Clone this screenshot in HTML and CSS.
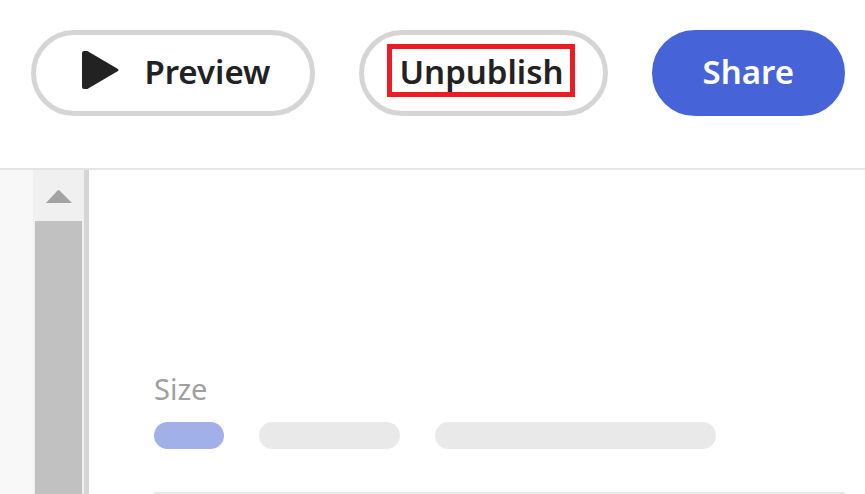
FILE: index.html
```html
<!DOCTYPE html>
<html lang="en">
<head>
<meta charset="utf-8">
<title>Form editor</title>
<link rel="stylesheet" href="styles.css">
</head>
<body>
<header class="toolbar">
  <button class="btn btn-preview" type="button">
    <svg class="play" viewBox="0 0 38 40" aria-hidden="true"><path d="M1 3Q1 1 3 1H6Q7 1 8 2L37 19Q38 20 37 21L8 38Q7 39 6 39H3Q1 39 1 37Z"/></svg>
    <span>Preview</span>
  </button>
  <button class="btn btn-unpublish" type="button"><span class="highlight">Unpublish</span></button>
  <button class="btn btn-share" type="button">Share</button>
</header>
<main class="workspace">
  <div class="gutter"></div>
  <div class="scrollbar">
    <button class="scroll-up" type="button" aria-label="Scroll up">
      <svg class="arrow" viewBox="0 0 26 13" aria-hidden="true"><path d="M0 13L12 0H13L26 13Z"/></svg>
    </button>
    <div class="thumb"></div>
  </div>
  <section class="panel">
    <h2 class="label">Size</h2>
    <div class="pills">
      <span class="pill pill-small"></span>
      <span class="pill pill-medium"></span>
      <span class="pill pill-large"></span>
    </div>
    <div class="card"></div>
  </section>
</main>
</body>
</html>
```
FILE: styles.css
```css
* {
  box-sizing: border-box;
}

body {
  margin: 0;
  height: 100vh;
  display: flex;
  flex-direction: column;
  overflow: hidden;
  background: #fff;
  color: #222;
  font-family: "Noto Sans", "Open Sans", sans-serif;
}

.toolbar {
  display: flex;
  justify-content: flex-end;
  gap: 44px;
  padding: 30px 20px 52px;
  border-bottom: 2px solid #e4e4e4;
}

.btn {
  display: flex;
  align-items: center;
  justify-content: center;
  height: 86px;
  padding: 0 46px 2px;
  border: 5px solid #d5d5d5;
  border-radius: 43px;
  background: #fff;
  color: #222;
  font: 600 33px/44px "Noto Sans", "Open Sans", sans-serif;
}

.btn-preview {
  gap: 25px;
  padding: 0 40px 2px 45px;
}

.play {
  width: 38px;
  height: 40px;
  margin-bottom: 4px;
  fill: #222;
}

.btn-unpublish {
  padding: 0 28px 5px 23px;
}

.highlight {
  height: 53px;
  padding: 0 6px 0 7px;
  border: 5px solid #ed1c24;
  line-height: 46px;
}

.btn-share {
  border-color: #4663d7;
  background: #4663d7;
  color: #fff;
}

.workspace {
  display: flex;
  flex: 1;
  min-height: 0;
}

.gutter {
  width: 33px;
  background: #f8f8f8;
}

.scrollbar {
  display: flex;
  flex-direction: column;
  width: 56px;
  padding: 0 2px;
  border-right: 5px solid #d5d5d5;
  background: #f0f0f0;
}

.scroll-up {
  display: flex;
  align-items: center;
  justify-content: center;
  height: 51px;
  padding: 2px 0 0;
  border: 0;
  background: transparent;
}

.arrow {
  width: 26px;
  height: 13px;
  fill: #a3a3a3;
}

.thumb {
  flex: 1;
  background: #c1c1c1;
}

.panel {
  display: flex;
  flex: 1;
  flex-direction: column;
  padding: 200px 20px 0 65px;
}

.label {
  margin: 0;
  color: #a0a0a0;
  font-size: 29px;
  font-weight: 400;
  line-height: 38px;
}

.pills {
  display: flex;
  gap: 35px;
  margin: 14px 0 43px;
}

.pill {
  height: 27px;
  border-radius: 14px;
  background: #e9e9e9;
}

.pill-small {
  width: 70px;
  background: #a2b0ea;
}

.pill-medium {
  width: 141px;
}

.pill-large {
  width: 281px;
}

.card {
  flex: 1;
  border: 2px solid #e9e9e9;
  border-bottom: 0;
  border-radius: 4px 4px 0 0;
}
```
